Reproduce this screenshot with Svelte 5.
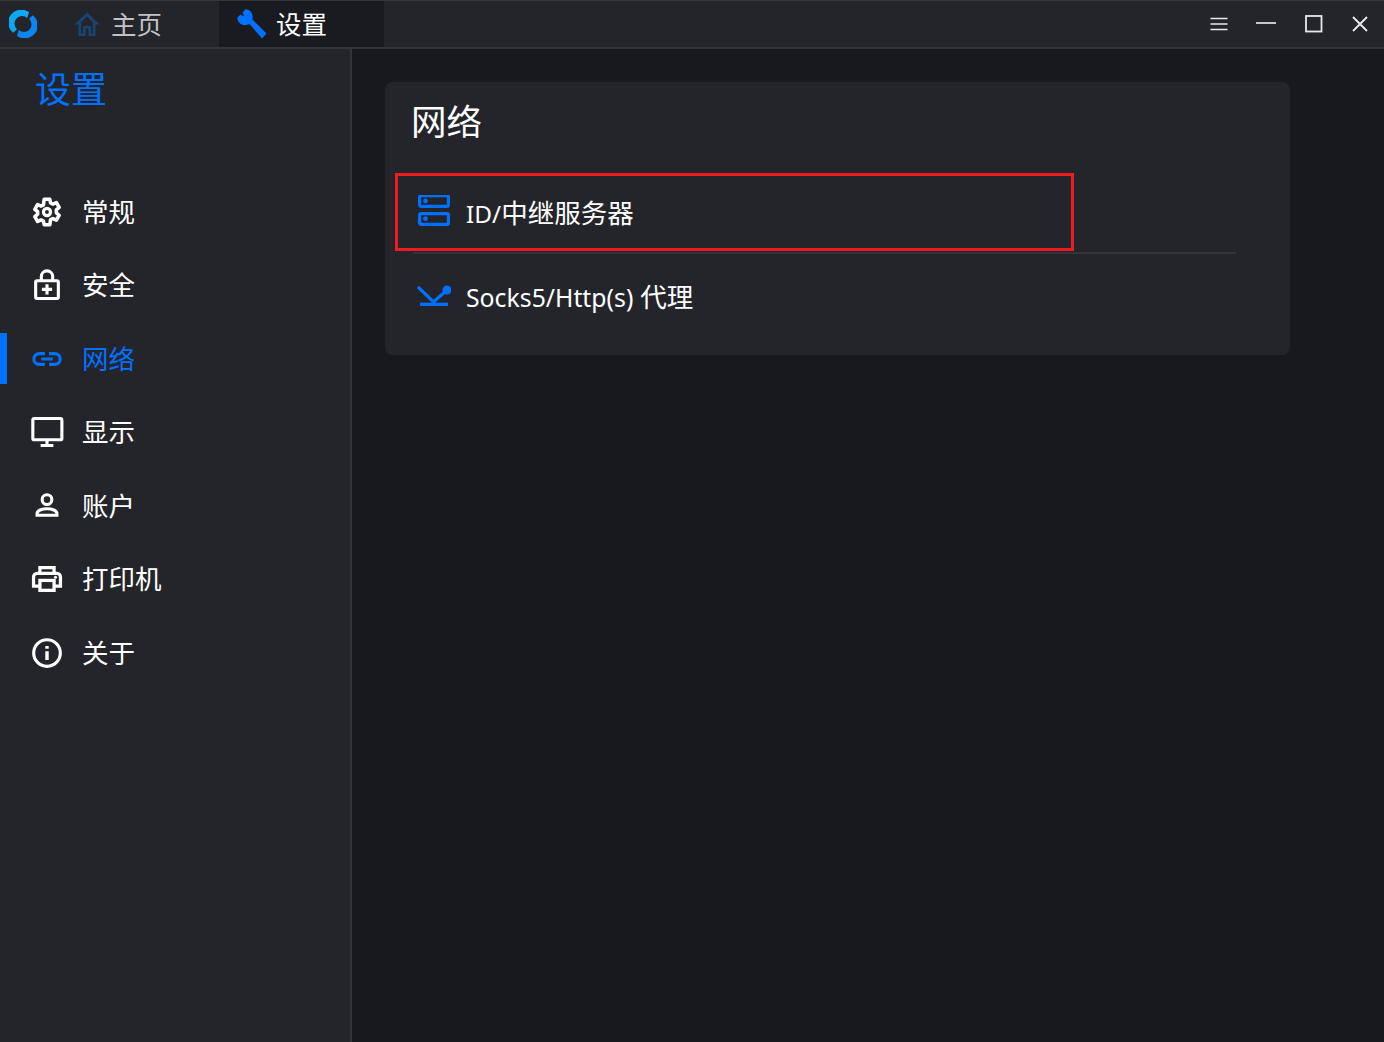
<script>
	const navItems = [
		{ key: 'general', label: '常规' },
		{ key: 'safety', label: '安全' },
		{ key: 'network', label: '网络', active: true },
		{ key: 'display', label: '显示' },
		{ key: 'account', label: '账户' },
		{ key: 'printer', label: '打印机' },
		{ key: 'about', label: '关于' }
	];
</script>

<div class="window">
	<header class="titlebar">
		<div class="logo">
			<svg viewBox="0 0 30 30" width="28" height="28">
				<path d="M21.500 2.500A13.800 13.800 0 0 0 4.500 24.500L8.500 20.500A8 8 0 0 1 19.500 8.500z" fill="#0ea8f2" />
				<path d="M8.500 27.500A13.800 13.800 0 0 0 25.500 5.500L21.500 9.500A8 8 0 0 1 10.500 21.500z" fill="#0b86ee" />
			</svg>
		</div>
		<div class="tab home">
			<svg viewBox="0 0 26 26" width="26" height="26" class="tab-icon">
				<path d="M13 1.500.5 13.500H4.500V25H11.500V17.500h3V25H21.500V13.500H25.500zM18.800 22.500H17V15H9v7.500H7.200V11.300L13 5.500l5.800 5.800z" fill="#1c4370" />
			</svg>
			<span>主页</span>
		</div>
		<div class="tab current">
			<svg viewBox="0 0 30 30" width="30" height="30" class="tab-icon">
				<path d="M8.500 .3 5.500 3.300 7 7.300 3.300 5.700 .3 8.500C.3 13 4 17 9.500 16L12.500 15 25 29.500 29.500 24.500 15.500 10.500C16.500 5 13.500 .3 8.500 .3z" fill="#0071ff" />
			</svg>
			<span>设置</span>
		</div>
		<div class="controls">
			<svg viewBox="0 0 20 20" width="20" height="20">
				<path d="M1.500 4.500h17M1.500 10h17M1.500 15.500h17" stroke="#e8e8e8" stroke-width="1.700" fill="none" />
			</svg>
			<svg viewBox="0 0 20 20" width="20" height="20">
				<path d="M0 9h20" stroke="#e8e8e8" stroke-width="1.700" fill="none" />
			</svg>
			<svg viewBox="0 0 20 20" width="20" height="20">
				<rect x="3" y="2" width="15.500" height="15.500" stroke="#e8e8e8" stroke-width="1.800" fill="none" />
			</svg>
			<svg viewBox="0 0 20 20" width="20" height="20">
				<path d="M3 3l14 14M17 3 3 17" stroke="#e8e8e8" stroke-width="1.900" fill="none" />
			</svg>
		</div>
	</header>

	<div class="body">
		<aside class="sidebar">
			<h1 class="page-title">设置</h1>
			<nav>
				{#each navItems as item}
					<div class="nav-item" class:active={item.active}>
						<span class="nav-icon">
							{#if item.key === 'general'}
								<svg viewBox="0 0 24 24" width="34" height="34">
									<path fill="none" stroke="currentColor" stroke-width="2.500" stroke-linejoin="round" d="M10 3h4l.5 2.600 1.700.8 2.400-1.100 2 3.400-2 1.700v2.200l2 1.700-2 3.400-2.400-1.100-1.700.8L14 21h-4l-.5-2.600-1.700-.8-2.400 1.100-2-3.400 2-1.700V11.800l-2-1.700 2-3.400 2.400 1.100 1.700-.8z" />
									<circle cx="12" cy="12" r="2.500" fill="none" stroke="currentColor" stroke-width="2.300" />
								</svg>
							{:else if item.key === 'safety'}
								<svg viewBox="0 0 24 24" width="34" height="34">
									<path fill="none" stroke="currentColor" stroke-width="2.200" d="M8 9V6a4 4 0 0 1 8 0V9" />
									<rect x="4" y="9" width="16" height="12.500" rx="1" fill="none" stroke="currentColor" stroke-width="2.200" />
									<path d="M12 11.500v7.200M8.400 15.100h7.200" stroke="currentColor" stroke-width="2.200" />
								</svg>
							{:else if item.key === 'network'}
								<svg viewBox="0 0 24 24" width="34" height="34">
									<path fill="none" stroke="currentColor" stroke-width="2.200" d="M10.500 8.200H6.500a3.800 3.800 0 0 0 0 7.600h4M13.500 8.200h4a3.800 3.800 0 0 1 0 7.600h-4M8 12h8" />
								</svg>
							{:else if item.key === 'display'}
								<svg viewBox="0 0 24 24" width="34" height="34">
									<rect x="2" y="2.500" width="20.500" height="15" rx="1" fill="none" stroke="currentColor" stroke-width="2.200" />
									<path d="M12 17.500v3M7.500 21.500h9" stroke="currentColor" stroke-width="2.200" />
								</svg>
							{:else if item.key === 'account'}
								<svg viewBox="0 0 24 24" width="34" height="34">
									<circle cx="12" cy="7.500" r="3.400" fill="none" stroke="currentColor" stroke-width="2.200" />
									<path fill="none" stroke="currentColor" stroke-width="2.200" d="M5 18.500v-1.200c0-2.100 3.500-3.400 7-3.400s7 1.300 7 3.400v1.200z" />
								</svg>
							{:else if item.key === 'printer'}
								<svg viewBox="0 0 24 24" width="34" height="34">
									<path fill="none" stroke="currentColor" stroke-width="2.300" d="M7 8V4h10v4M7 17H2.500v-6.500A2.500 2.500 0 0 1 5 8h14a2.500 2.500 0 0 1 2.500 2.500V17H17" />
									<rect x="7" y="13" width="10" height="7" fill="none" stroke="currentColor" stroke-width="2.300" />
									<circle cx="18" cy="10.800" r="1.100" fill="currentColor" />
								</svg>
							{:else}
								<svg viewBox="0 0 24 24" width="34" height="34">
									<circle cx="12" cy="12" r="9.400" fill="none" stroke="currentColor" stroke-width="2.200" />
									<path d="M12 10.800V17M12 7v2" stroke="currentColor" stroke-width="2.400" />
								</svg>
							{/if}
						</span>
						<span>{item.label}</span>
					</div>
				{/each}
			</nav>
		</aside>

		<main class="content">
			<section class="card">
				<h2 class="card-title">网络</h2>
				<div class="row outlined">
					<svg viewBox="0 2 34 34" width="34" height="34" class="row-icon">
						<rect x="1.600" y="2.600" width="28.800" height="10.800" rx="1.500" fill="none" stroke="#0071ff" stroke-width="3.200" />
						<rect x="1.600" y="20.600" width="28.800" height="10.800" rx="1.500" fill="none" stroke="#0071ff" stroke-width="3.200" />
						<circle cx="7.500" cy="8" r="2.400" fill="#0071ff" />
						<circle cx="7.500" cy="25.700" r="2.400" fill="#0071ff" />
					</svg>
					<span class="row-label"><span class="latin">ID/</span>中继服务器</span>
				</div>
				<div class="divider"></div>
				<div class="row proxy">
					<svg viewBox="0 0 34 34" width="34" height="34" class="row-icon">
						<path d="M1 7 16.500 22 30 10" fill="none" stroke="#0071ff" stroke-width="3.200" />
						<circle cx="30" cy="10" r="4.500" fill="#0071ff" />
						<path d="M3 24.300h28" stroke="#0071ff" stroke-width="3.300" />
					</svg>
					<span class="row-label"><span class="latin">Socks5/Http(s)</span> 代理</span>
				</div>
			</section>
		</main>
	</div>
</div>

<style>
	:global(body) {
		margin: 0;
		background: #18191e;
	}

	.window {
		width: 1384px;
		height: 1042px;
		display: flex;
		flex-direction: column;
		overflow: hidden;
		color: #fff;
		font-family: "Noto Sans", "Noto Sans CJK SC", sans-serif;
		font-size: 26.500px;
	}

	.titlebar {
		height: 46px;
		display: flex;
		align-items: stretch;
		background: #24252b;
		border-top: 1px solid #35363c;
		border-bottom: 2px solid #33343a;
		flex-shrink: 0;
	}

	.logo {
		width: 46px;
		display: flex;
		align-items: center;
		padding-left: 9px;
		box-sizing: border-box;
	}

	.tab {
		display: flex;
		align-items: center;
		font-size: 25.500px;
		box-sizing: border-box;
	}

	.tab span {
		position: relative;
		top: -2px;
	}

	.tab.home {
		width: 173px;
		padding-left: 28px;
		gap: 11px;
		color: #c2c2c4;
	}

	.tab.current {
		width: 165px;
		padding-left: 18px;
		gap: 9px;
		background: #1a1b20;
	}

	.controls {
		margin-left: auto;
		display: flex;
		align-items: center;
		gap: 27px;
		padding-right: 14px;
	}

	.body {
		flex: 1;
		display: flex;
		min-height: 0;
	}

	.sidebar {
		width: 350px;
		background: #24252b;
		border-right: 2px solid #33343a;
		flex-shrink: 0;
	}

	.page-title {
		margin: 0;
		padding: 16px 0 0 35px;
		height: 126px;
		box-sizing: border-box;
		font-size: 36px;
		font-weight: 400;
		line-height: 50px;
		color: #0071ff;
	}

	.nav-item {
		height: 73.500px;
		display: flex;
		align-items: center;
		padding-left: 30px;
		gap: 18px;
		position: relative;
		line-height: 1;
	}

	.nav-item.active {
		color: #0071ff;
	}

	.nav-item.active::before {
		content: "";
		position: absolute;
		left: 0;
		top: 11px;
		width: 7px;
		height: 51px;
		background: #0071ff;
	}

	.nav-icon {
		width: 34px;
		height: 34px;
		display: block;
	}

	.nav-icon svg {
		display: block;
	}

	.content {
		flex: 1;
		padding: 33px 0 0 33px;
	}

	.card {
		width: 905px;
		height: 273px;
		box-sizing: border-box;
		background: #24252b;
		border-radius: 8px;
		padding: 0 54px 0 10px;
	}

	.card-title {
		margin: 0;
		padding-left: 16px;
		height: 91px;
		font-size: 35.500px;
		font-weight: 400;
		line-height: 78px;
	}

	.row {
		display: flex;
		align-items: center;
		gap: 14px;
		padding-left: 20px;
		box-sizing: border-box;
	}

	.row-label {
		padding-bottom: 2px;
	}

	.latin {
		font-size: 24.800px;
	}

	.row.outlined .latin {
		font-size: 24.400px;
	}

	.row.outlined {
		width: 679px;
		height: 78px;
		border: 3px solid #ed1c24;
	}

	.row-icon {
		flex-shrink: 0;
	}

	.divider {
		height: 2px;
		margin: 1px 0 0 18px;
		background: #33343a;
	}

	.row.proxy {
		height: 86px;
		padding-left: 22px;
	}

	.row.proxy .row-label {
		padding-bottom: 4px;
		margin-left: 1px;
	}
</style>
